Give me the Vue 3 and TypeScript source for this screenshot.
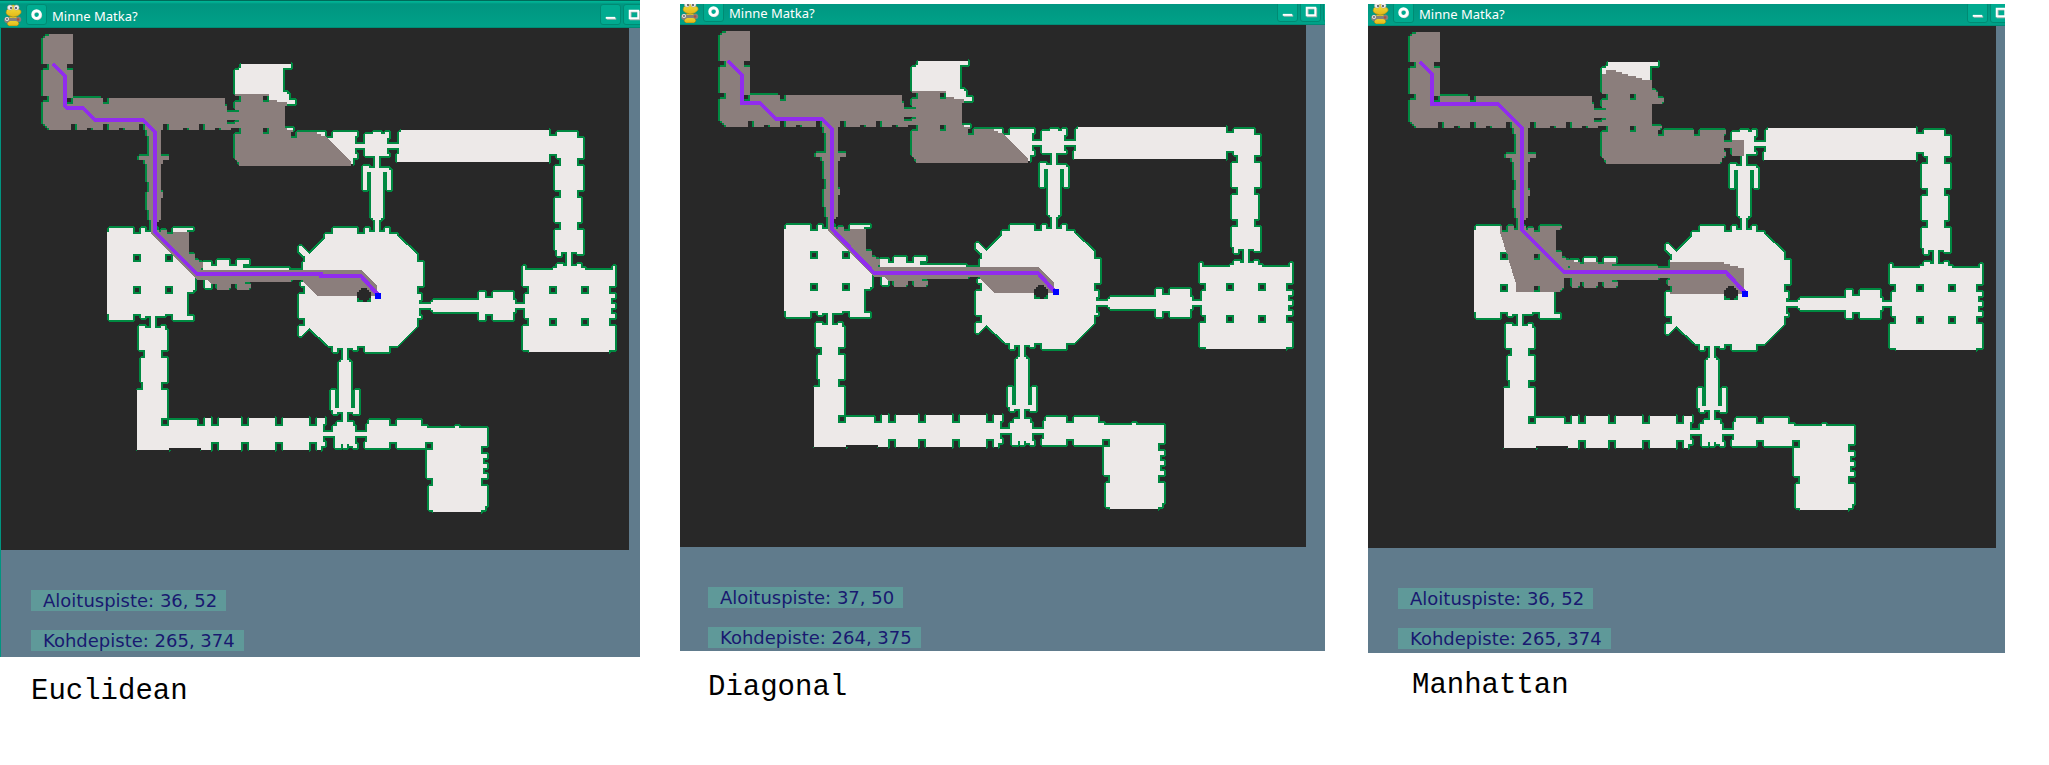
<script setup lang="ts">
interface MapWindow {
  id: string
  start: string
  goal: string
  caption: string
  visited: string
  route: string
  goalX: number
  goalY: number
}

// All map coordinates are grid cells.
const northVisited = 'M110 33H134V36H138V37H143V51H158V53H160V54H162L175 67V70H110Z'
const hallVisited =
  'M75 98V103L98 126H103L105 128H108V132H126V127H151L158 134H188V129L180 121H101V117H99V102H86V101H75Z'

const windows: MapWindow[] = [
  {
    id: 'euclidean',
    start: '36, 52',
    goal: '265, 374',
    caption: 'Euclidean',
    visited: northVisited + hallVisited,
    route: 'M26 18L32 24V39L33 40H41L47 46H71L77 52V102L98 123H160V124H180L189 134',
    goalX: 187,
    goalY: 132.5,
  },
  {
    id: 'diagonal',
    start: '37, 50',
    goal: '264, 375',
    caption: 'Diagonal',
    visited: northVisited + hallVisited,
    route: 'M25 18L32 25V39H41L49 47H72L77 52V102L98 124H180L189 134',
    goalX: 187.5,
    goalY: 132,
  },
  {
    id: 'manhattan',
    start: '36, 52',
    goal: '265, 374',
    caption: 'Manhattan',
    visited:
      'M110 24H119V22H124V23H127V24H130V25H134V26H137V27H150V50H180V57H188V65H180V70H110Z' +
      'M66 98V103L74 129V133H151V134H188V121H185V120H181V119H178V118H103V98Z',
    route: 'M26 18L32 24V39H65L77 51V102L98 123H179L189 134',
    goalX: 187,
    goalY: 132.5,
  },
]

const startArea =
  'M24 3H36V18H33V21H36V35H33V38H36V35H51V38H54V35H112V39H113V42H119V45H113V48H117V50H115V51H110V50H107V51H102V48H99V51H94V50H91V51H84V48H81V51H80V64H84V66H81V68H80V82H81V85H80V96H79V97H77V102H75V96H74V91H73V82H74V77H73V68H72V66H69V64H74V54H73V51H72V48H69V51H62V50H59V51H54V48H51V51H46V50H43V51H38V48H35V51H24V50H23V49H22V48H21V37H24V34H21V21H24V18H21V5H22V4H24Z'

const pillar = (x: number, y: number): string => `M${x} ${y}v4h4v-4z`

const northRoom =
  'M120 18H145V20H141V32H143V33H144V36H147V38H141V50H146V51H144V55H148V52H162V55H166V52H178V54H177V58H183V60H177V63H178V65H176V68H119V66H118V65H117V53H120V49H117V47H119V45H113V42H119V40H117V37H120V33H117V21H119V20H120Z' +
  pillar(130, 33) + pillar(130, 49)

const northJunction =
  'M182 53H186V52H190V53H192V52H194V55H193V58H199V52H200V51H274V54H278V52H288V55H291V65H288V69H291V81H288V85H290V97H288V101H291V113H288V112H285V122H283V112H280V114H278V111H277V101H280V97H277V85H280V81H277V69H280V65H278V63H274V67H198V63H199V60H193V63H194V64H189V70H194V71H195V81H193V72H191V95H190V96H189V103H187V96H186V95H185V72H183V81H181V69H184V70H187V64H182V60H176V58H182Z'

const rotunda =
  'M166 100H178V103H182V100H184V102H187V100H189V102H192V100H194V103H198V104L208 113V117H211V129H208V133H210V136H209V138H215V137H216V136H239V132H242V135H246V132H256V136H257V138H263V140H257V142H256V146H246V143H242V146H239V142H216V141H215V140H209V144H210V145H208V149L198 159H194V162H182V159H178V161H176V160H168V162H166V159H164L154 150L150 154H149V149H152V145H149V133H152V129H150V127H151V125H146V121H151V117H152V114H151L149 112V109H150L154 113L162 105V103H166Z'

const eastRoom =
  'M261 119H262V121H276V120H278V118H281V119H283V118H285V119H288V118H290V120H292V121H306V119H307V129H304V133H307V135H305V138H307V140H305V143H307V145H304V149H307V161H304V162H264V161H261V149H264V145H262V140H260V138H262V133H264V129H261Z' +
  pillar(274, 129) + pillar(290, 129) + pillar(274, 145) + pillar(290, 145)

const westPassage =
  'M101 117H105V119H108V116H114V119H118V116H124V118H121V120H144V121H152V125H145V126H121V128H124V130H118V127H114V130H108V127H105V130H102V125H97V121H101Z'

const westHall =
  'M54 100H66V103H70V100H72V102H75V100H78V102H80V101H82V103H86V100H96V101H93V113H96V116H98V117H100V120H98V125H97V131H96V132H93V144H96V146H86V143H82V144H77V151H75V144H72V145H70V143H66V146H54Z' +
  pillar(66, 113) + pillar(82, 113) + pillar(66, 129) + pillar(82, 129)

const southWest =
  'M69 149H72V150H80V149H82V151H83V161H80V165H83V177H80V181H83V195H80V199H84V196H98V199H102V195H105V199H109V195H120V199H124V195H137V199H141V195H154V199H158V195H162V198H161V202H167V204H161V207H162V209H160V211H158V207H154V211H141V207H137V211H124V207H120V211H109V207H105V211H100V210H84V211H68V181H71V177H70V165H72V161H69Z'

const southJunction =
  'M171 159H173V166H174V167H175V190H177V181H179V193H176V192H173V197H176V199H177V202H184V204H177V208H178V210H176V209H174V208H173V210H171V208H170V210H167V204H161V202H166V199H168V197H171V192H168V193H166V191H165V181H167V190H169V167H170V166H171Z'

const southEast =
  'M183 198H184V196H194V199H198V196H210V199H213V200H227V199H229V200H243V209H240V213H243V215H241V218H243V220H241V223H243V225H240V229H243V239H242V241H240V242H216V241H214V229H216V225H213V211H216V207H212V210H198V207H194V210H182V207H183Z'

const rooms = [
  northRoom, northJunction, rotunda, eastRoom, westPassage,
  westHall, southWest, southJunction, southEast,
]

// Edges where the floor meets the background without a wall line.
const openEdges =
  'M120 18H145M119 68H176M200 51H274M198 67H274M264 162H304M216 242H240' +
  'M68 181V211M68 211H84M84 210H100M100 211H105M109 211H120M124 211H137M141 211H154M158 211H160' +
  'M102 195H105M109 195H120M124 195H137M141 195H154M158 195H162M54 102V143'
</script>

<template>
  <main class="page">
    <svg class="defs" aria-hidden="true">
      <defs>
        <g id="rooms">
          <path v-for="(d, i) in rooms" :key="i" :d="d" fill-rule="evenodd" />
        </g>
        <path id="start-area" :d="startArea" />
        <clipPath id="floor">
          <path v-for="(d, i) in rooms" :key="'a' + i" :d="d" clip-rule="evenodd" />
          <path v-for="(d, i) in rooms" :key="'b' + i" :d="d" clip-rule="evenodd" transform="translate(1 0)" />
          <path v-for="(d, i) in rooms" :key="'c' + i" :d="d" clip-rule="evenodd" transform="translate(0 1)" />
        </clipPath>
        <linearGradient id="snake" x1="0" y1="0" x2="0" y2="1">
          <stop offset="0" stop-color="#f4e53c" />
          <stop offset="1" stop-color="#e3b71a" />
        </linearGradient>
      </defs>
    </svg>

    <figure v-for="w in windows" :key="w.id" class="shot" :class="w.id">
      <section class="window">
        <header class="titlebar">
          <div class="bar">
            <svg class="logo" viewBox="0 0 18 22" aria-hidden="true">
              <path d="M5 13H13L14 17L15 20L13 22H5L3 20L4 17Z" fill="url(#snake)" stroke="#9c7a10" stroke-width=".6" />
              <path d="M2 9Q2 6 4 5L5 2Q9 0 13 2L14 5Q18 6 17 9Q14 13 9 13Q3 12 2 9Z" fill="url(#snake)" stroke="#a88b16" stroke-width=".6" />
              <circle cx="6" cy="3.5" r="2.6" fill="#eee" stroke="#999" stroke-width=".5" />
              <circle cx="12.5" cy="3.5" r="2.6" fill="#eee" stroke="#999" stroke-width=".5" />
              <circle cx="7" cy="4" r=".9" fill="#333" />
              <circle cx="12" cy="4" r=".9" fill="#333" />
              <path d="M0 15Q2 11 6 14H12Q15 11 17 14Q18 18 15 18L12 17H6L3 19Q0 19 0 15Z" fill="#85827c" />
              <circle cx="3" cy="15" r="2" fill="#e8e8e8" />
              <circle cx="3" cy="15" r=".9" fill="#555" />
              <circle cx="14" cy="15.5" r="1.2" fill="#b64a3c" />
            </svg>
            <button class="tool" type="button" aria-label="Window menu">
              <svg viewBox="0 0 20 20"><circle cx="11" cy="11" r="4" class="shade" /><circle cx="10" cy="10" r="4" class="glyph ring" /></svg>
            </button>
            <h2 class="title">Minne Matka?</h2>
            <button class="tool" type="button" aria-label="Minimize">
              <svg viewBox="0 0 20 20"><path d="M6 14.5H16" class="shade" /><path d="M5 13.5H15" class="glyph" /></svg>
            </button>
            <button class="tool" type="button" aria-label="Maximize">
              <svg viewBox="0 0 20 20"><path d="M7 7H16V15H7Z" class="shade" /><path d="M6 6H15V14H6Z" class="glyph" /></svg>
            </button>
            <button class="tool" type="button" aria-label="Close"></button>
          </div>
        </header>
        <div class="content">
          <svg class="map" viewBox="0 0 314 261" role="img" :aria-label="w.caption" shape-rendering="crispEdges">
            <g fill="#008941">
              <use href="#start-area" x="-1" />
              <use href="#start-area" y="-1" />
            </g>
            <path d="M24 2.5H36M54 34.5H112M50 34.5H54" stroke="#282828" />
            <use href="#rooms" fill="none" stroke="#008941" stroke-width="2" stroke-linejoin="bevel" />
            <path :d="openEdges" fill="none" stroke="#282828" stroke-width="2" />
            <path d="M53.5 102V143" stroke="#ede9e8" />
            <use href="#rooms" fill="#ede9e8" />
            <use href="#start-area" fill="#8b7e7c" />
            <path :d="w.visited" fill="#8b7e7c" clip-path="url(#floor)" />
            <path d="M178 135V137H185V135Z" fill="#008941" />
            <path d="M180 130H183V131H184V132H185V135H184V136H183V137H181V136H179V135H178V132H179V131H180Z" fill="#282828" />
            <path :d="w.route" fill="none" stroke="#912cee" stroke-width="2" />
            <rect :x="w.goalX" :y="w.goalY" width="3" height="3" fill="#0000ff" />
          </svg>
          <p class="point">Aloituspiste: {{ w.start }}</p>
          <p class="point">Kohdepiste: {{ w.goal }}</p>
        </div>
      </section>
      <figcaption class="caption">{{ w.caption }}</figcaption>
    </figure>
  </main>
</template>

<style>
body {
  margin: 0;
  background: #fff;
}
</style>

<style scoped>
.page {
  display: grid;
  grid-template-columns: 640fr 40fr 645fr 43fr 637fr 44fr;
  align-items: start;
}
.defs {
  position: absolute;
  width: 0;
  height: 0;
}
.shot {
  margin: 4px 0 0;
  min-width: 0;
}
.euclidean {
  grid-column: 1;
  margin-top: 0;
}
.diagonal {
  grid-column: 3;
}
.manhattan {
  grid-column: 5;
}
.window {
  display: flex;
  flex-direction: column;
  overflow: hidden;
  background: #607b8c;
}
.titlebar {
  display: flex;
  align-items: flex-end;
  height: 28px;
  overflow: hidden;
}
.diagonal .titlebar {
  height: 21px;
}
.manhattan .titlebar {
  height: 22px;
}
.bar {
  display: flex;
  flex: none;
  align-items: center;
  box-sizing: border-box;
  width: 669px;
  height: 28px;
  padding: 2px 0 0 4px;
  border-bottom: 1px solid #008c76;
  background: linear-gradient(#006a59 0 1px, #00b294 1px 2px, #009580 4px, #00a188 27px);
}
.content {
  display: flex;
  flex-direction: column;
  align-items: flex-start;
  box-sizing: border-box;
  width: 669px;
  padding-bottom: 6px;
  border-left: 1px solid #009580;
}
.diagonal .bar,
.diagonal .content {
  margin-left: -3px;
}
.manhattan .bar,
.manhattan .content {
  margin-left: -1px;
}
.diagonal .content {
  padding-bottom: 3px;
}
.manhattan .content {
  padding-bottom: 4px;
}
.logo {
  width: 18px;
  height: 22px;
  margin-right: 4px;
}
.tool {
  box-sizing: border-box;
  width: 21px;
  height: 21px;
  margin: 0 2px 0 0;
  padding: 0;
  border: 1px solid #008a73;
  border-radius: 3px;
  background: #00ab90;
}
.tool svg {
  display: block;
  width: 100%;
  height: 100%;
}
.glyph,
.shade {
  fill: none;
  stroke: #fff;
  stroke-width: 2;
}
.shade {
  stroke: #a9b8b4;
}
.ring {
  stroke-width: 3;
}
.title {
  flex: 1;
  margin: 0;
  padding: 2px 0 0 3px;
  color: #fff;
  font: 400 13px/20px "Noto Sans", sans-serif;
}
.map {
  display: block;
  width: 628px;
  height: 522px;
  margin-bottom: 40px;
  background: #282828;
}
.point {
  margin: 0 0 0 30px;
  padding: 0 9px 0 12px;
  background: #5f9999;
  color: #191970;
  font: 18px/21px "DejaVu Sans", sans-serif;
}
.point + .point {
  margin-top: 19px;
}
.caption {
  padding: 18px 0 0 31px;
  color: #000;
  font: 29px/34px "Liberation Mono", monospace;
}
.diagonal .caption {
  padding: 20px 0 0 28px;
}
.manhattan .caption {
  padding: 16px 0 0 44px;
}
</style>
